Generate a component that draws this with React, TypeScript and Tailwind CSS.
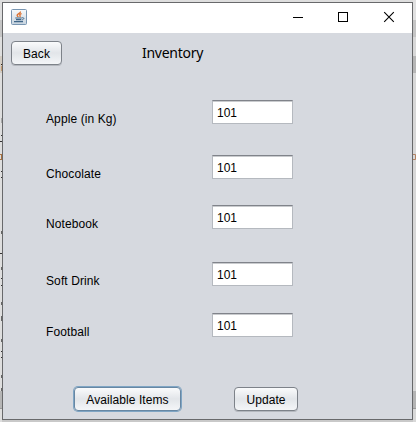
const items = [
  { name: 'Apple (in Kg)', gap: 'mt-0' },
  { name: 'Chocolate', gap: 'mt-[31px]' },
  { name: 'Notebook', gap: 'mt-[26px]' },
  { name: 'Soft Drink', gap: 'mt-[33px]' },
  { name: 'Football', gap: 'mt-[27px]' },
];

const button =
  'flex items-center justify-center rounded-[4px] border pt-px text-[12px] leading-none tracking-[0.08px] whitespace-nowrap text-black bg-linear-to-b from-[#fafbfc] via-[#e2e5e9] to-[#f4f6f8]';

function JavaIcon() {
  return (
    <svg width="16" height="16" viewBox="0 0 16 16" fill="none">
      <defs>
        <linearGradient id="tile" x1="0" y1="0" x2="0" y2="1">
          <stop offset="0" stopColor="#f8fafb" />
          <stop offset="1" stopColor="#c6d3df" />
        </linearGradient>
      </defs>
      <rect x="0.5" y="0.5" width="15" height="15" rx="1" fill="url(#tile)" stroke="#7895b1" />
      <path d="M9.4 2.5c.8 1.7-3.6 2.4-3.3 3.9.1.7.9 1 1 1.6M10.6 4.6c-1.6.5-2.4 1.1-1.6 1.9.5.6.2 1-.3 1.5" stroke="#dd7030" strokeWidth="1.3" />
      <path d="M4.3 9h6.4M5 10.6h5.2M3 12.7h9" stroke="#3f6688" strokeWidth="1.2" />
      <path d="M10.8 8.8c3-.6 2.4 1.7-.1 2.2" stroke="#3f6688" />
    </svg>
  );
}

function TitleBar() {
  return (
    <div className="flex h-[30px] shrink-0 items-start justify-between bg-white pl-2">
      <div className="pt-[6px]">
        <JavaIcon />
      </div>
      <svg width="119" height="30" viewBox="0 0 119 30" fill="none" stroke="#000" shapeRendering="crispEdges">
        <path d="M0 14.5h10" />
        <rect x="45.5" y="9.5" width="9" height="9" />
        <path d="M91.2 9.2l9.6 9.6M100.8 9.2l-9.6 9.6" shapeRendering="auto" strokeWidth="1.1" />
      </svg>
    </div>
  );
}

function LeftEdge() {
  return (
    <svg className="shrink-0" width="2" height="422" viewBox="0 0 2 422">
      <rect width="2" height="422" fill="#dedede" />
      <rect y="20" width="2" height="17" fill="#c5c5c5" />
      <rect y="56" width="2" height="17" fill="#d2cbc2" />
      <rect y="391" width="2" height="17" fill="#b5b5b5" />
      <path d="M0 408.5h2" stroke="#999" />
      <path d="M1 64.5h1" stroke="#332211" />
      <path d="M1.5 66v5" stroke="#c49a70" />
      <path d="M1.5 118v5" stroke="#aaa" />
      <path d="M1 135.5h1M0 141.5h2M1 171.5h1M1 177.5h1M0 253.5h2M1 278.5h1M1 285.5h1M1 351.5h1M1 357.5h1" stroke="#333" />
      <path d="M0 154.5h2M1.5 154v6M0 159.5h2" stroke="#a9713f" />
      <path d="M1.5 231v3M1.5 267v3M1.5 302v3M1.5 316v5M1.5 339v3M1.5 375v3M1.5 388v3" stroke="#666" />
    </svg>
  );
}

function RightEdge() {
  return (
    <svg className="shrink-0" width="3" height="422" viewBox="0 0 3 422">
      <rect width="3" height="422" fill="#d8d8d8" />
      <rect width="3" height="20" fill="#e1e1e1" />
      <rect y="20" width="3" height="17" fill="#c5c5c5" />
      <rect y="56" width="3" height="17" fill="#b6b6b6" />
      <rect y="391" width="3" height="17" fill="#b4b4b4" />
      <path d="M0 408.5h3" stroke="#999" />
      <path d="M0 154.5h2.5v5H0" fill="none" stroke="#b28263" />
    </svg>
  );
}

export default function App() {
  return (
    <div className="flex h-[422px] w-[416px] overflow-hidden bg-[#c9c9c9] font-['Liberation_Sans',Arial,sans-serif] text-black">
      <LeftEdge />
      <div className="flex h-[422px] w-[411px] flex-col bg-[#c9c9c9]">
        <div className="h-[2px] shrink-0 bg-[#dedede]" />
        <main className="flex h-[418px] w-[411px] shrink-0 flex-col border border-[#68696b] bg-[#d6d9df]">
          <TitleBar />
          <header className="flex h-[67px] shrink-0 items-start pt-2 pl-2">
            <button className={`${button} h-[24px] w-[51px] border-[#7d8289] shadow-[0_1px_0_#b4b8be]`}>Back</button>
            <h1 className="mt-[2px] ml-[80px] font-['Noto_Sans',sans-serif] text-[14px] leading-[20px] tracking-[-0.27px]">Inventory</h1>
          </header>
          <section className="flex flex-col pl-[43px]">
            {items.map((item) => (
              <label key={item.name} className={`flex h-[24px] items-start ${item.gap}`}>
                <span className="w-[166px] pt-[12px] text-[12px] leading-[14px] tracking-[0.1px]">{item.name}</span>
                <input
                  className="h-[24px] w-[81px] border border-[#b5b9bf] border-t-[#80838a] bg-white pt-[2px] pl-1 text-[12px] leading-[20px] text-black shadow-[inset_0_1px_0_#c9cbce] outline-none"
                  defaultValue="101"
                />
              </label>
            ))}
          </section>
          <footer className="mt-[50px] flex items-center pl-[71px]">
            <button className={`${button} h-[24px] w-[107px] border-[#6787a3] shadow-[0_0_0_1px_#7fa5c4]`}>Available Items</button>
            <button className={`${button} ml-[53px] h-[24px] w-[64px] border-[#7d8289] shadow-[0_1px_0_#b4b8be]`}>Update</button>
          </footer>
        </main>
      </div>
      <RightEdge />
    </div>
  );
}
